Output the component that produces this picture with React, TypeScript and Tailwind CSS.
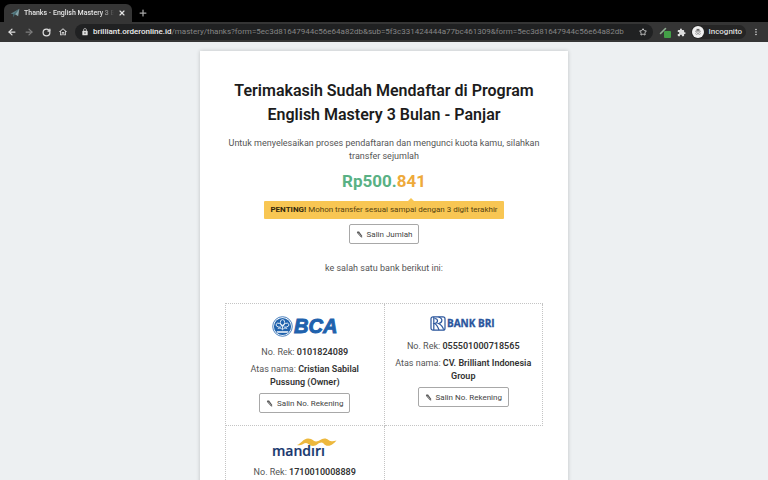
import type { ReactNode } from 'react'
import { ArrowLeft, ArrowRight, Plus, RotateCw, Star, X } from 'lucide-react'
import { MdExtension, MdLock, MdMoreVert, MdOutlineHome } from 'react-icons/md'

/**
 * Small icon button used in the browser toolbar.
 */
function ToolButton({ label, children }: { label: string; children: ReactNode }) {
  return (
    <button type="button" aria-label={label} className="flex h-4 w-3 shrink-0 items-center justify-center">
      {children}
    </button>
  )
}

function PlaneIcon() {
  return (
    <svg viewBox="0 0 16 16" className="h-2.5 w-2.5 shrink-0" aria-hidden="true">
      <path d="M1 9 15 1 9 10Z" fill="#5d7f86" />
      <path d="M15 1 13 13 8 10Z" fill="#84a3a8" />
      <path d="M15 1 5 10v5l3-5Z" fill="#456b73" />
    </svg>
  )
}

function ExtensionIcon() {
  return (
    <svg viewBox="0 0 12 12" className="h-3 w-3" aria-hidden="true">
      <path d="M1.5 7.5 6.5 2.5" stroke="#8fae91" strokeWidth="1.6" strokeLinecap="round" />
      <rect x="5" y="5" width="7" height="7" rx="1" fill="#43a047" />
    </svg>
  )
}

function IncognitoIcon() {
  return (
    <svg viewBox="0 0 24 24" className="h-3 w-3 shrink-0" aria-hidden="true">
      <circle cx="12" cy="12" r="12" fill="#f1f1f1" />
      <path d="M8.5 9.5 9.6 5.5 12 6.2l2.4-.7 1.1 4Z" fill="#666" />
      <path d="M6 10.5h12" stroke="#666" strokeWidth="1.2" />
      <circle cx="9.3" cy="15" r="2" fill="none" stroke="#777" strokeWidth="1.1" />
      <circle cx="14.7" cy="15" r="2" fill="none" stroke="#777" strokeWidth="1.1" />
      <path d="M11 14.6h2" stroke="#777" strokeWidth="1" />
    </svg>
  )
}

function BrowserBar() {
  return (
    <header className="shrink-0 bg-black font-['Roboto','Liberation_Sans',sans-serif]">
      <div className="flex h-[22px] items-end pl-1">
        <div className="flex h-[18px] w-32 items-center gap-1 rounded-t-md bg-[#353535] px-1.5 text-[7px] font-medium text-[#e4e4e4]">
          <PlaneIcon />
          <span className="flex-1 overflow-hidden whitespace-nowrap [mask-image:linear-gradient(to_right,black_85%,transparent)]">
            Thanks - English Mastery 3 Bulan
          </span>
          <button type="button" aria-label="Close tab">
            <X className="h-2 w-2" strokeWidth={3.5} />
          </button>
        </div>
        <button type="button" aria-label="New tab" className="ml-1.5 flex h-[18px] items-center text-[#a8a8a8]">
          <Plus className="h-2.5 w-2.5" strokeWidth={3} />
        </button>
      </div>

      <div className="flex h-5 items-center bg-[#353535] px-1.5 text-[#dedede]">
        <nav className="flex shrink-0 gap-[5px]">
          <ToolButton label="Back">
            <ArrowLeft className="h-2.5 w-2.5" strokeWidth={3} />
          </ToolButton>
          <ToolButton label="Forward">
            <ArrowRight className="h-2.5 w-2.5 text-[#7d7d7d]" strokeWidth={3} />
          </ToolButton>
          <ToolButton label="Reload">
            <RotateCw className="h-[9px] w-[9px]" strokeWidth={3.4} />
          </ToolButton>
          <ToolButton label="Home">
            <MdOutlineHome className="h-2.5 w-2.5" />
          </ToolButton>
        </nav>
        <div className="ml-1.5 flex h-4 min-w-0 flex-1 items-center gap-1 rounded-full bg-[#202122] px-1.5">
          <MdLock className="h-2 w-2 shrink-0" />
          <p className="flex-1 overflow-hidden text-[8px] whitespace-nowrap text-[#858585]">
            <span className="font-medium text-[#ececec]">brilliant.orderonline.id</span>
            /mastery/thanks?form=5ec3d81647944c56e64a82db&amp;sub=5f3c331424444a77bc461309&amp;form=5ec3d81647944c56e64a82db
          </p>
          <Star className="h-2 w-2 shrink-0" strokeWidth={2.6} />
        </div>
        <div className="flex shrink-0 items-center gap-1 pl-1.5">
          <ToolButton label="Page helper">
            <ExtensionIcon />
          </ToolButton>
          <ToolButton label="Extensions">
            <MdExtension className="h-[9px] w-[9px]" />
          </ToolButton>
          <div className="flex h-3.5 items-center gap-1 rounded-full bg-[#252525] pr-1 pl-px text-[8px] font-medium">
            <IncognitoIcon />
            Incognito
          </div>
          <ToolButton label="Menu">
            <MdMoreVert className="h-2.5 w-2.5" />
          </ToolButton>
        </div>
      </div>
    </header>
  )
}

function BcaLogo() {
  return (
    <svg viewBox="0 0 66 21" className="h-[21px] w-[66px]" role="img" aria-label="BCA">
      <circle cx="10.5" cy="10.5" r="9.8" fill="#fff" stroke="#1f62ad" strokeWidth="0.8" />
      <circle cx="10.5" cy="10.5" r="8.6" fill="#1f62ad" />
      <g fill="none" stroke="#fff" strokeWidth="0.8">
        <ellipse cx="10.5" cy="6.4" rx="2.2" ry="2.8" />
        <ellipse cx="6.8" cy="9.2" rx="2.8" ry="1.9" transform="rotate(20 6.8 9.2)" />
        <ellipse cx="14.2" cy="9.2" rx="2.8" ry="1.9" transform="rotate(-20 14.2 9.2)" />
        <path d="M10.5 9v4.500" />
        <path d="M5.800 12.500c2-.8 3.700 0 4.700 1.200 1-1.200 2.700-2 4.700-1.200" />
      </g>
      <path d="M4.500 15.200h12l-1 1.500h-10Z" fill="#fff" />
      <text x="22" y="17" fill="#1f62ad" stroke="#1f62ad" strokeWidth="1" className="font-['Liberation_Sans',sans-serif] text-[20px] font-bold italic">
        BCA
      </text>
    </svg>
  )
}

function BriLogo() {
  return (
    <svg viewBox="0 0 66 15" className="h-[15px] w-[66px]" role="img" aria-label="Bank BRI">
      <rect x="1" y="0.8" width="14" height="13.4" rx="2" fill="#fff" stroke="#2a559c" strokeWidth="1.2" />
      <g fill="none" stroke="#2a559c" strokeWidth="1.2">
        <path d="M3.8 1v13" />
        <path d="M4.5 2.5c4 0 4 4.5 0 5 2 1 3.5 3.5 4.5 6.5" />
        <path d="M8.5 1c5 1.5 4 6 0 6.5 2 1 4.5 3.5 5 6" />
      </g>
      <text x="17" y="11" fill="#2a559c" stroke="#2a559c" strokeWidth="0.3" className="font-['Open_Sans',sans-serif] text-[10px] font-bold">
        BANK BRI
      </text>
    </svg>
  )
}

function MandiriLogo() {
  return (
    <svg viewBox="0 0 66 19" className="h-[19px] w-[66px]" role="img" aria-label="Mandiri">
      <path
        d="M25 7C29 6 31 .5 36 .5c5 0 5 3 8 3 3.500 0 5-3 8.500-3 3.500 0 4 2.700 7 2.700 2 0 3-.2 5-.7C62 5 60 7.800 56 7.800c-4 0-4-3.300-6.500-3.300-3 0-5 3.500-8.500 3.500-4 0-4.500-3-7-3-2.500 0-5 3.500-9 2Z"
        fill="#edb83d"
      />
      <text x="0" y="18" fill="#17376e" stroke="#17376e" strokeWidth="0.2" className="font-['Open_Sans',sans-serif] text-[14px] font-semibold">
        mandırı
      </text>
    </svg>
  )
}

function CopyButton({ children }: { children: ReactNode }) {
  return (
    <button
      type="button"
      className="inline-flex h-5 items-center gap-1 rounded-xs border border-[#a8a8a8] bg-white px-1.5 text-[8px] text-[#444]"
    >
      <svg viewBox="0 0 8 8" className="h-[7px] w-[7px]" aria-hidden="true">
        <path d="M1.5.5 3.5.5 7 5.5 7 7.7 5 6.7 1 2Z" fill="#555" />
        <path d="M2.5 2 6 6.5" stroke="#fff" strokeWidth=".5" />
      </svg>
      {children}
    </button>
  )
}

interface Bank {
  logo: ReactNode
  number: string
  owner?: string
}

const banks: Bank[] = [
  { logo: <BcaLogo />, number: '0101824089', owner: 'Cristian Sabilal Pussung (Owner)' },
  { logo: <BriLogo />, number: '055501000718565', owner: 'CV. Brilliant Indonesia Group' },
  { logo: <MandiriLogo />, number: '1710010008889' },
]

/**
 * One bank account with its number, owner and a copy button.
 */
function BankCell({ logo, number, owner }: Bank) {
  return (
    <li className="flex flex-col items-center border-r border-b border-dotted border-[#c4c4c4] px-2 py-3 text-center">
      {logo}
      <p className="mt-[9px]">
        No. Rek: <strong className="font-semibold text-[#333]">{number}</strong>
      </p>
      {owner && (
        <>
          <p className="my-1">
            Atas nama: <strong className="font-semibold text-[#333]">{owner}</strong>
          </p>
          <CopyButton>Salin No. Rekening</CopyButton>
        </>
      )}
    </li>
  )
}

export default function App() {
  return (
    <div className="flex h-screen flex-col overflow-hidden bg-[#edf0f2] font-['Roboto','Liberation_Sans',sans-serif]">
      <BrowserBar />
      <main className="flex min-h-0 flex-1 justify-center overflow-hidden pt-[9px]">
        <article className="h-max w-full max-w-[368px] bg-white px-[25px] pt-7 pb-8 text-center text-[9px] leading-[13px] text-[#555] shadow-[0_0_4px_rgba(0,0,0,0.2)]">
          <h1 className="text-[16px] leading-6 font-semibold text-[#1c1c1c]">
            Terimakasih Sudah Mendaftar di Program English Mastery 3 Bulan - Panjar
          </h1>
          <p className="mt-2.5">
            Untuk menyelesaikan proses pendaftaran dan mengunci kuota kamu, silahkan transfer sejumlah
          </p>
          <p className="mt-1.5 text-[17px] leading-6 font-bold text-[#59b184]">
            Rp500.<span className="text-[#eeaa3b]">841</span>
          </p>
          <div className="mt-2 flex justify-center">
            <p className="relative h-[18px] rounded-[1px] bg-[#f8c653] px-1.5 text-[8px] leading-[18px] text-[#55420f]">
              <span className="absolute -top-[3px] right-[90px] border-x-[3px] border-b-[3px] border-x-transparent border-b-[#f8c653]" />
              <strong className="font-bold text-[#33280b]">PENTING!</strong> Mohon transfer sesuai sampai dengan 3 digit terakhir
            </p>
          </div>
          <div className="mt-[5px] flex justify-center">
            <CopyButton>Salin Jumlah</CopyButton>
          </div>
          <p className="mt-[18px]">ke salah satu bank berikut ini:</p>
          <ul className="mt-7 grid grid-cols-2 items-stretch border-t border-l border-dotted border-[#c4c4c4]">
            {banks.map((bank) => (
              <BankCell key={bank.number} {...bank} />
            ))}
          </ul>
        </article>
      </main>
    </div>
  )
}
